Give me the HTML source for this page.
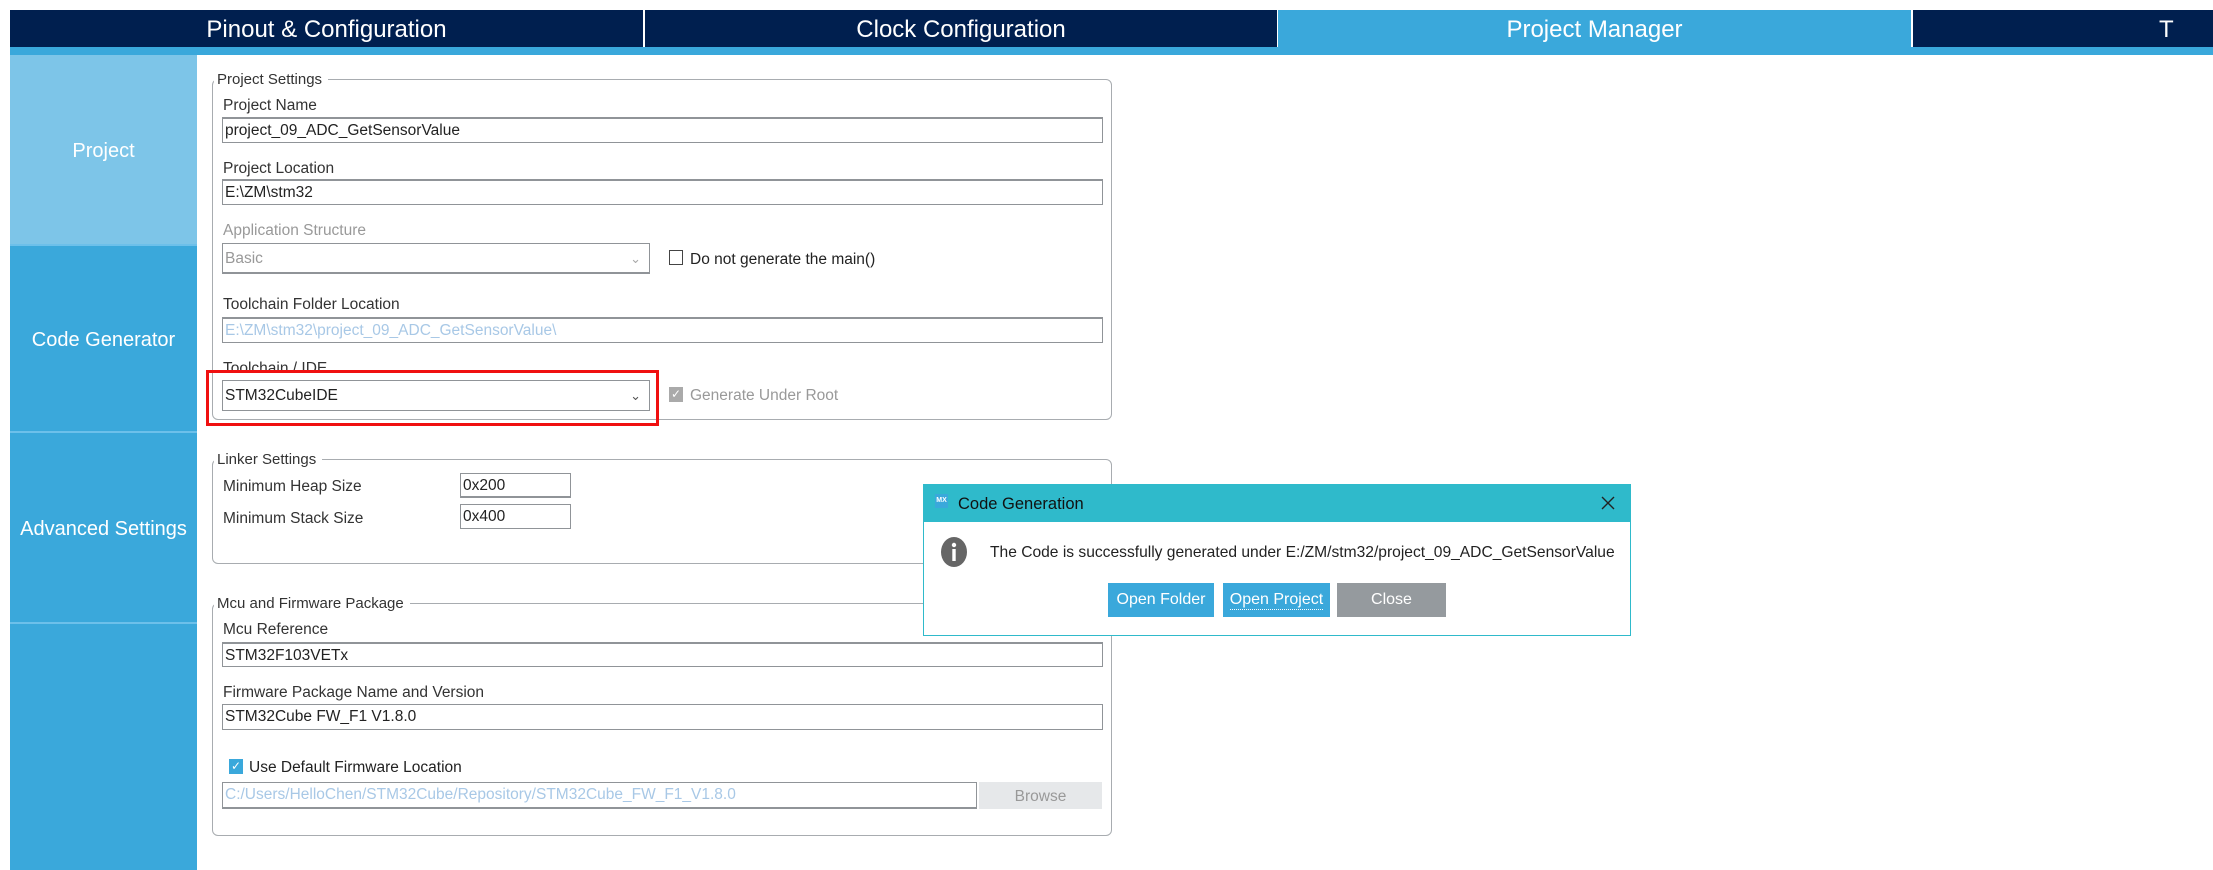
<!DOCTYPE html>
<html><head><meta charset="utf-8"><style>
*{box-sizing:border-box;margin:0;padding:0}
body{width:2213px;height:870px;background:#fff;position:relative;overflow:hidden;font-family:"Liberation Sans",sans-serif;color:#222}
.a{position:absolute}
.tab{position:absolute;top:10px;height:37px;background:#001f4f;color:#fff;font-size:24px;line-height:39px;text-align:center}
.side{position:absolute;left:10px;width:187px;color:#fff;font-size:20px;display:flex;align-items:center;justify-content:center;background:#3aa8db;border-bottom:2px solid #6cc0ea;padding-top:4px}
.fs{position:absolute;border:1.5px solid #a8acb0;border-radius:6px}
.lg{position:absolute;background:#fff;font-size:15px;color:#333;padding:0 6px 0 3px;line-height:16px}
.lb{position:absolute;font-size:15.5px;color:#333;line-height:18px;margin-top:2px}
.in{position:absolute;border:1.5px solid #909498;border-top-width:2.5px;background:#fff;font-size:15.5px;line-height:24px;padding-left:2px;color:#222;white-space:nowrap;overflow:hidden}
.btn{position:absolute;height:34px;color:#fff;font-size:16px;line-height:34px;text-align:center}
</style></head><body>
<div class="tab" style="left:10px;width:633px">Pinout &amp; Configuration</div>
<div class="tab" style="left:645px;width:632px">Clock Configuration</div>
<div class="tab" style="left:1278px;width:633px;background:#3aa8db">Project Manager</div>
<div class="tab" style="left:1913px;width:300px;text-align:left;padding-left:246px">T</div>
<div class="a" style="left:10px;top:47px;width:2203px;height:8px;background:#3aa8db"></div>

<div class="side" style="top:55px;height:191px;background:#7dc5e8">Project</div>
<div class="side" style="top:246px;height:187px">Code Generator</div>
<div class="side" style="top:433px;height:191px">Advanced Settings</div>
<div class="side" style="top:624px;height:246px;border:none"></div>

<div class="fs" style="left:212px;top:79px;width:900px;height:341px"></div>
<div class="lg" style="left:214px;top:72px">Project Settings</div>
<div class="lb" style="left:223px;top:95px">Project Name</div>
<div class="in" style="left:222px;top:117px;width:881px;height:26px">project_09_ADC_GetSensorValue</div>
<div class="lb" style="left:223px;top:158px">Project Location</div>
<div class="in" style="left:222px;top:179px;width:881px;height:26px">E:\ZM\stm32</div>
<div class="lb" style="left:223px;top:220px;color:#999">Application Structure</div>
<div class="in" style="left:222px;top:243px;width:428px;height:31px;line-height:30px;color:#999;border-bottom-width:2.5px;border-top-width:1.5px">Basic<span class="a" style="right:8px;top:0;color:#aaa;font-size:13px">&#8964;</span></div>
<div class="a" style="left:669px;top:250px;width:14px;height:15px;border:1.5px solid #444"></div>
<div class="lb" style="left:690px;top:249px;color:#222">Do not generate the main()</div>
<div class="lb" style="left:223px;top:294px">Toolchain Folder Location</div>
<div class="in" style="left:222px;top:317px;width:881px;height:26px;color:#a8c8e6">E:\ZM\stm32\project_09_ADC_GetSensorValue\</div>
<div class="lb" style="left:223px;top:358px">Toolchain / IDE</div>
<div class="in" style="left:222px;top:380px;width:428px;height:31px;line-height:30px;border-top-width:1.5px">STM32CubeIDE<span class="a" style="right:8px;top:0;color:#555;font-size:13px">&#8964;</span></div>
<div class="a" style="left:206px;top:370px;width:453px;height:56px;border:3px solid #f01010"></div>
<div class="a" style="left:669px;top:387px;width:14px;height:15px;background:#aaa;color:#fff;font-size:12px;line-height:15px;text-align:center">&#10003;</div>
<div class="lb" style="left:690px;top:385px;color:#999">Generate Under Root</div>

<div class="fs" style="left:212px;top:459px;width:900px;height:105px"></div>
<div class="lg" style="left:214px;top:452px">Linker Settings</div>
<div class="lb" style="left:223px;top:476px">Minimum Heap Size</div>
<div class="in" style="left:460px;top:473px;width:111px;height:25px;border-top-width:1.5px;border-bottom-width:2.5px">0x200</div>
<div class="lb" style="left:223px;top:508px">Minimum Stack Size</div>
<div class="in" style="left:460px;top:504px;width:111px;height:25px;border-top-width:1.5px">0x400</div>

<div class="fs" style="left:212px;top:603px;width:900px;height:233px"></div>
<div class="lg" style="left:214px;top:596px">Mcu and Firmware Package</div>
<div class="lb" style="left:223px;top:619px">Mcu Reference</div>
<div class="in" style="left:222px;top:642px;width:881px;height:25px">STM32F103VETx</div>
<div class="lb" style="left:223px;top:682px">Firmware Package Name and Version</div>
<div class="in" style="left:222px;top:704px;width:881px;height:26px;border-top-width:1.5px">STM32Cube FW_F1 V1.8.0</div>
<div class="a" style="left:229px;top:759px;width:14px;height:15px;background:#3aa8db;color:#fff;font-size:12px;line-height:15px;text-align:center">&#10003;</div>
<div class="lb" style="left:249px;top:757px;color:#222">Use Default Firmware Location</div>
<div class="in" style="left:222px;top:782px;width:755px;height:27px;color:#a8c8e6;border-top-width:1.5px;border-bottom-width:2.5px">C:/Users/HelloChen/STM32Cube/Repository/STM32Cube_FW_F1_V1.8.0</div>
<div class="a" style="left:979px;top:782px;width:123px;height:27px;background:#e6e8ea;color:#999;font-size:15.5px;line-height:29px;text-align:center">Browse</div>

<div class="a" style="left:923px;top:484px;width:708px;height:152px;border:1.5px solid #2fbacb;background:#fff"></div>
<div class="a" style="left:923px;top:484px;width:708px;height:38px;background:#2fbacb"></div>
<div class="a" style="left:935px;top:494px;width:13px;height:14px;background:#3aa8db;color:#fff;font-size:7px;line-height:14px;text-align:center;font-weight:bold">MX</div>
<div class="a" style="left:958px;top:493px;font-size:16.5px;color:#111;line-height:22px">Code Generation</div>
<svg class="a" style="left:1601px;top:496px" width="14" height="14"><path d="M1 1L13 13M13 1L1 13" stroke="#222" stroke-width="1.4"/></svg>
<svg class="a" style="left:940px;top:536px" width="28" height="32"><ellipse cx="14" cy="16" rx="13" ry="15" fill="#666"/><circle cx="14" cy="9" r="2.2" fill="#fff"/><rect x="12.3" y="13" width="3.4" height="12" fill="#fff"/></svg>
<div class="a" style="left:990px;top:544px;font-size:15.6px;color:#222;line-height:18px">The Code is successfully generated under E:/ZM/stm32/project_09_ADC_GetSensorValue</div>
<div class="btn" style="left:1108px;top:583px;width:106px;background:#3aa8db">Open Folder</div>
<div class="btn" style="left:1223px;top:583px;width:107px;background:#3aa8db"><span style="border-bottom:1px dotted #fff;line-height:18px;display:inline-block">Open Project</span></div>
<div class="btn" style="left:1337px;top:583px;width:109px;background:#959a9e">Close</div>
</body></html>
